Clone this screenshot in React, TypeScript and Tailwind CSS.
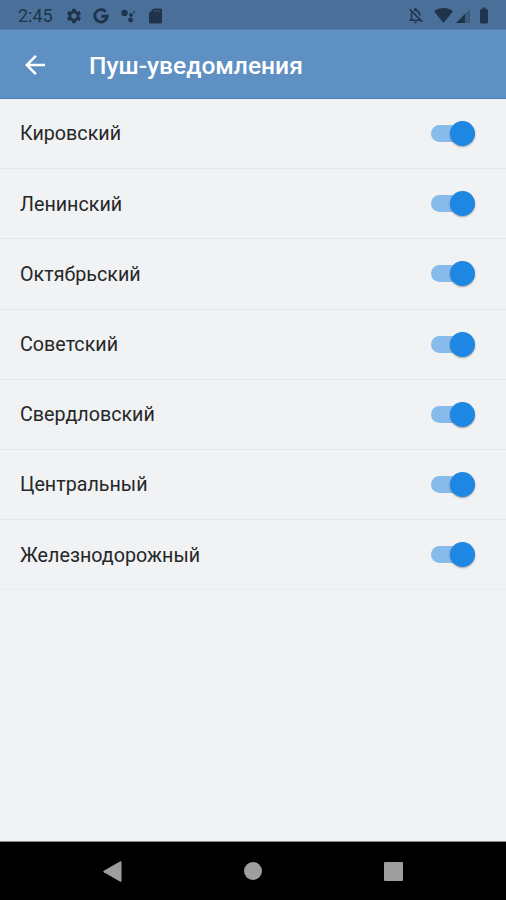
import { useState } from 'react';
import { MdArrowBack, MdBatteryFull, MdOutlineNotificationsOff, MdSettings } from 'react-icons/md';

const DISTRICTS = [
  'Кировский',
  'Ленинский',
  'Октябрьский',
  'Советский',
  'Свердловский',
  'Центральный',
  'Железнодорожный',
];

function StatusBar() {
  return (
    <div className="flex h-[30px] shrink-0 items-center border-b border-[#527fae] bg-[#4a7099] pt-[2px] text-[#1f344b]">
      <span className="ml-[18px] w-[47px] text-[18px] leading-none">2:45</span>
      <MdSettings className="h-[18px] w-[18px]" />
      <svg className="ml-[10px] h-4 w-4" viewBox="0 0 16 16" fill="none" stroke="currentColor" strokeWidth="2.9">
        <path d="M12.7 3.7A6.2 6.2 0 1 0 14.2 8.3H8.2" />
      </svg>
      <svg className="ml-[12px] h-4 w-4" viewBox="0 0 16 16" fill="currentColor">
        <circle cx="3.5" cy="5" r="3.2" />
        <circle cx="10" cy="7" r="1.9" />
        <circle cx="9.6" cy="12" r="2.4" />
        <circle cx="13.2" cy="4" r="1" />
      </svg>
      <svg className="ml-[12px] h-4 w-[13px]" viewBox="0 0 13 16" fill="currentColor">
        <path d="M4.500.5H11.500Q13 .5 13 2v12q0 1.500-1.500 1.500h-10Q0 15.500 0 14V5z" />
        <path d="M5 3h6" stroke="#4a7099" strokeWidth="1.400" strokeDasharray="1.400 0.700" opacity="0.6" />
      </svg>
      <div className="ml-auto flex items-center">
        <MdOutlineNotificationsOff className="h-[19px] w-[19px]" />
        <svg className="ml-[9px] h-[15px] w-[19px]" viewBox="0 0 19 15" fill="currentColor">
          <path d="M0 3.3C5.4-1.1 13.6-1.1 19 3.3L9.5 15z" />
        </svg>
        <svg className="ml-[3px] h-[14px] w-[14px]" viewBox="0 0 14 14" fill="currentColor">
          <path d="M14 0v14H0z" opacity="0.35" />
          <path d="M9 5v9H0z" />
        </svg>
        <MdBatteryFull className="mr-[12px] ml-[4px] h-[19px] w-[20px]" />
      </div>
    </div>
  );
}

interface ToggleProps {
  checked: boolean;
  label: string;
  onChange: () => void;
}

function Toggle({ checked, label, onChange }: ToggleProps) {
  return (
    <button
      type="button"
      role="switch"
      aria-checked={checked}
      aria-label={label}
      onClick={onChange}
      className={`flex h-[17px] w-[42px] items-center rounded-full ${checked ? 'justify-end bg-[#87bbec]' : 'justify-start bg-zinc-300'}`}
    >
      <span
        className={`-mr-[2px] h-[25px] w-[25px] shrink-0 rounded-full shadow-[0_1px_2px_rgba(0,0,0,0.35)] ${checked ? 'bg-[#1e86e3]' : 'bg-zinc-50'}`}
      />
    </button>
  );
}

export default function App() {
  const [enabled, setEnabled] = useState<boolean[]>(DISTRICTS.map(() => true));

  const toggle = (index: number) => {
    setEnabled(prev => prev.map((value, i) => (i === index ? !value : value)));
  };

  return (
    <div className="flex h-[900px] w-[506px] flex-col overflow-hidden bg-[#f0f2f4] font-[Roboto,sans-serif]">
      <StatusBar />

      {/* App bar */}
      <header className="flex h-[69px] shrink-0 items-center border-b border-[#4d7fb3] bg-[#5e90c4] pt-[2px] text-white">
        <button type="button" aria-label="Назад" className="ml-[20px]">
          <MdArrowBack className="h-[30px] w-[30px]" />
        </button>
        <h1 className="ml-[39px] pt-[2px] text-[24.6px] leading-none font-medium whitespace-nowrap">
          Пуш-уведомления
        </h1>
      </header>

      {/* Districts */}
      <ul className="flex-1">
        {DISTRICTS.map((name, index) => (
          <li
            key={name}
            className="flex h-[70.2px] items-center justify-between border-b border-[#e4e6e8] pr-[33px] pl-[20px] last:border-[#eaecee]"
          >
            <span className="pt-[1.5px] text-[19.7px] leading-none text-[#262728]">{name}</span>
            <Toggle checked={enabled[index]} label={name} onChange={() => toggle(index)} />
          </li>
        ))}
      </ul>

      {/* Navigation bar */}
      <nav className="flex h-[59px] shrink-0 items-center border-t border-[#8b8c8d] bg-black text-[#9e9e9e]">
        <svg className="ml-[103px] h-[21px] w-[19px]" viewBox="0 0 19 21" fill="currentColor">
          <path d="M17.3.3Q18.5-.2 18.5 1v19q0 1.200-1.200.7L.8 11.200Q-.2 10.500.8 9.800z" />
        </svg>
        <span className="ml-[122px] h-[18px] w-[18px] rounded-full bg-[#9e9e9e]" />
        <span className="ml-[122px] h-[19px] w-[19px] rounded-[1px] bg-[#9e9e9e]" />
      </nav>
    </div>
  );
}
